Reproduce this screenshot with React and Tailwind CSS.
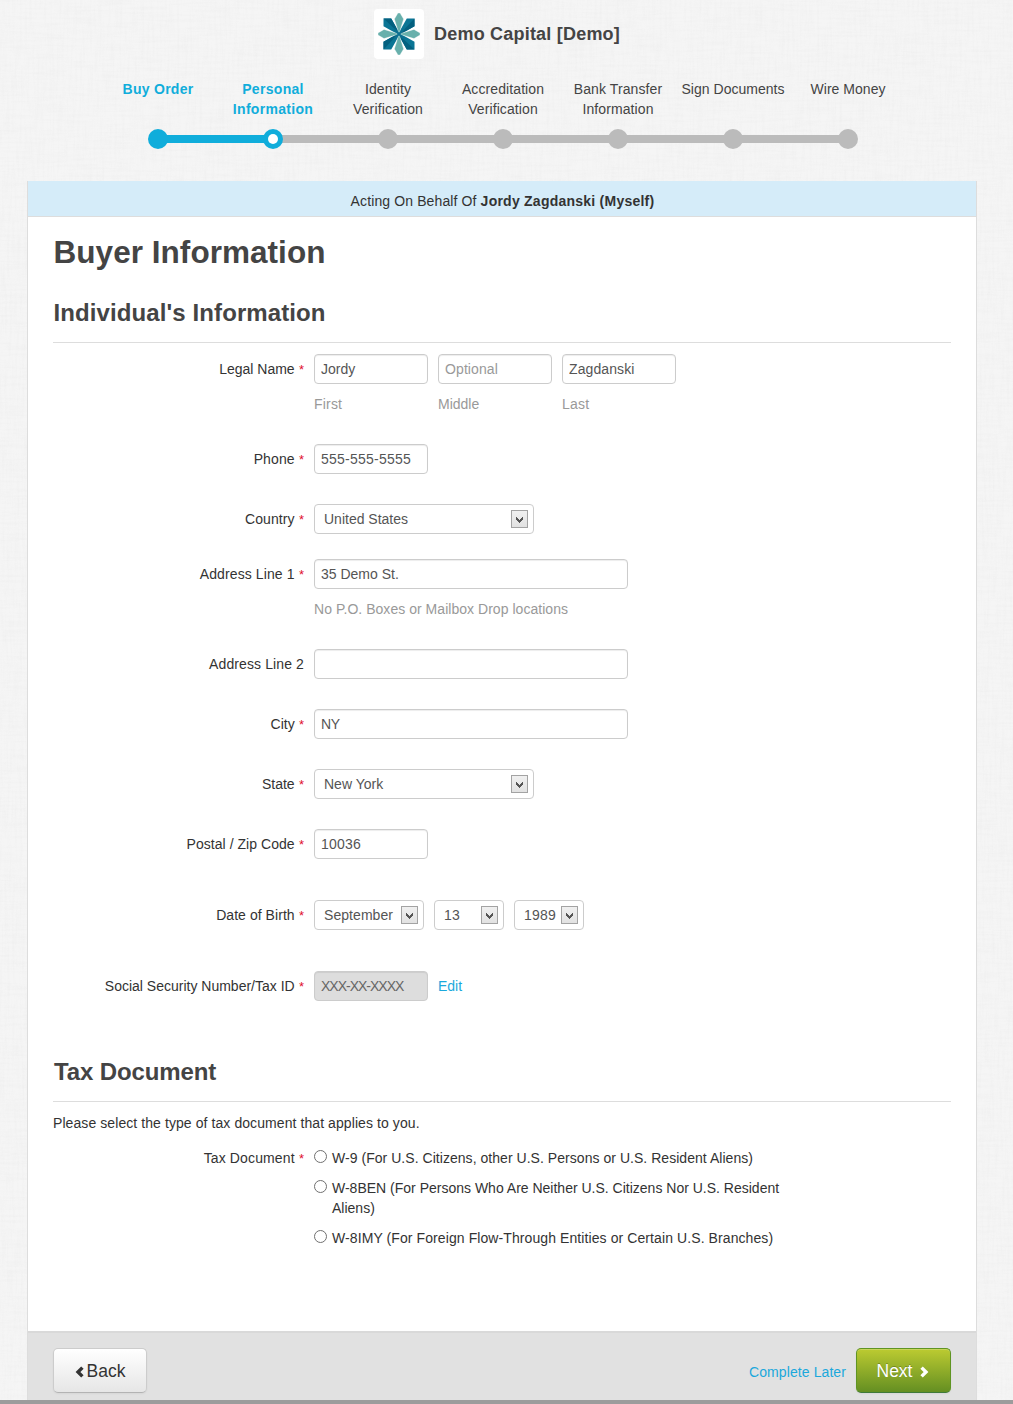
import React from 'react';

const steps = [
  { label: ['Buy Order'], track: 'tracking-[0.28px]', state: 'done' },
  { label: ['Personal', 'Information'], track: 'tracking-[0.3px]', state: 'current' },
  { label: ['Identity', 'Verification'], track: 'tracking-[0.12px]', state: 'todo' },
  { label: ['Accreditation', 'Verification'], track: 'tracking-[0.1px]', state: 'todo' },
  { label: ['Bank Transfer', 'Information'], track: 'tracking-[0.1px]', state: 'todo' },
  { label: ['Sign Documents'], track: 'tracking-[0.02px]', state: 'todo' },
  { label: ['Wire Money'], track: 'tracking-[0.03px]', state: 'todo' },
];

function Logo() {
  const kite = 'M0 0 L-4.6 -15 L-1 -21 H1 L4.6 -15 Z';
  const angles = [0, 90, 180, 270];
  return (
    <svg width="50" height="50" viewBox="-25 -25 50 50" className="rounded-[4px] bg-white">
      {angles.map((a) => (
        <g key={a} transform={`rotate(${a})`}>
          <path d="M-1 0 L7.8 -15.5 H15.5 V-7.8 L0 1 Z" fill="#0b7595" />
          <path d="M0 1 L15.5 -7.8 V-15.5 Z" fill="#04607f" />
        </g>
      ))}
      {angles.map((a) => (
        <path key={a} d={kite} transform={`rotate(${a})`} fill="#68b0ac" stroke="#fff" strokeWidth=".35" />
      ))}
      <path d="M-5 -5 L5 5 M-5 5 L5 -5" stroke="#0b6f90" strokeWidth="1.8" />
    </svg>
  );
}

function Linen() {
  return (
    <svg className="absolute inset-0 h-full w-full" aria-hidden="true">
      <filter id="weft" x="0" y="0" width="100%" height="100%">
        <feTurbulence type="fractalNoise" baseFrequency="0.03 0.4" numOctaves="3" seed="4" />
        <feColorMatrix values="0 0 0 0 0.5  0 0 0 0 0.5  0 0 0 0 0.5  0.5 0 0 0 -0.2" />
      </filter>
      <filter id="warp" x="0" y="0" width="100%" height="100%">
        <feTurbulence type="fractalNoise" baseFrequency="0.4 0.03" numOctaves="3" seed="9" />
        <feColorMatrix values="0 0 0 0 0.5  0 0 0 0 0.5  0 0 0 0 0.5  0.5 0 0 0 -0.2" />
      </filter>
      <rect width="100%" height="100%" filter="url(#weft)" opacity=".22" />
      <rect width="100%" height="100%" filter="url(#warp)" opacity=".22" />
    </svg>
  );
}

function Dot({ state }) {
  if (state === 'current')
    return (
      <span className="relative z-10 flex size-5 items-center justify-center rounded-full bg-[#10addb]">
        <span className="size-2.5 rounded-full bg-white" />
      </span>
    );
  if (state === 'done') return <span className="relative z-10 size-5 rounded-full bg-[#10addb]" />;
  return <span className="relative z-10 size-5 rounded-full bg-[#bbb]" />;
}

function Row({ label, track = '', required = true, className, children }) {
  return (
    <div className={`flex ${className}`}>
      <div className={`mr-2.5 w-[251px] shrink-0 whitespace-nowrap text-right leading-[30px] text-[#333] ${track}`}>
        {label}
        {required && (
          <span className="tracking-normal text-[#e0102c]">
            {' '}
            <span className="ml-[0.4px] text-[13px]">*</span>
          </span>
        )}
      </div>
      {children}
    </div>
  );
}

function Field({ value, placeholder, width = 'w-[114px]', track = '' }) {
  return (
    <input
      type="text"
      defaultValue={value}
      placeholder={placeholder}
      className={`h-[30px] rounded-[4px] border border-[#ccc] bg-white px-1.5 text-sm text-[#555] shadow-[inset_0_1px_1px_rgba(0,0,0,0.075)] placeholder:text-[#999] ${width} ${track}`}
    />
  );
}

function Select({ value, width, track = '' }) {
  return (
    <button
      type="button"
      className={`flex h-[30px] items-center justify-between whitespace-nowrap rounded-[4px] border border-[#ccc] bg-white pl-[9px] pr-[5px] text-[#555] ${width} ${track}`}
    >
      {value}
      <span className="flex h-[18px] w-[17px] items-center justify-center border border-[#a3a3a3] bg-linear-to-b from-[#f0f0f0] to-[#e2e2e2]">
        <svg width="7" height="6" viewBox="0 0 7 6" shapeRendering="crispEdges" className="mt-0.5">
          <path d="M0 0h1v1h1v1h1v1h1V2h1V1h1V0h1v3H6v1H5v1H4v1H3V5H2V4H1V3H0z" fill="#555" />
        </svg>
      </span>
    </button>
  );
}

function Radio({ children, className }) {
  return (
    <label className={`flex ${className}`}>
      <input
        type="radio"
        name="tax"
        className="mr-[5px] mt-0.5 size-[13px] shrink-0 appearance-none rounded-full border border-[#707070] bg-white"
      />
      <span className="whitespace-nowrap">{children}</span>
    </label>
  );
}

export default function App() {
  return (
    <div className="relative h-[1404px] w-[1013px] overflow-hidden bg-[#f5f5f5] font-['Liberation_Sans',Arial,sans-serif] text-sm leading-5 text-[#333]">
      <Linen />
      <div className="relative flex h-full flex-col">
        <header className="flex h-[79px] items-start pl-[374px] pt-[9px]">
          <Logo />
          <span className="ml-2.5 text-[18px] font-bold leading-[50px] tracking-[0.21px] text-[#444]">
            Demo Capital [Demo]
          </span>
        </header>

        <ol className="ml-[100.5px] grid h-[102px] w-[805px] grid-cols-7">
          {steps.map((s, i) => (
            <li key={i} className="flex flex-col items-center">
              <div
                className={`h-[50px] text-center ${s.track} ${s.state === 'todo' ? 'text-[#444]' : 'font-bold text-[#10addb]'}`}
              >
                {s.label.map((t) => (
                  <div key={t}>{t}</div>
                ))}
              </div>
              <div className="relative flex h-5 w-full items-center justify-center">
                {i > 0 && (
                  <span
                    className={`absolute right-1/2 h-2 w-full ${i === 1 ? 'bg-[#10addb]' : 'bg-[#bbb]'}`}
                  />
                )}
                <Dot state={s.state} />
              </div>
            </li>
          ))}
        </ol>

        <main className="ml-[27px] flex w-[950px] flex-1 flex-col border-x border-[#ddd] bg-white">
          <div className="h-9 border-b border-[#ddd] bg-[#d5ecf9] pl-px pt-2.5 text-center">
            <span className="tracking-[0.12px]">Acting On Behalf Of </span>
            <strong className="tracking-[0.24px]">Jordy Zagdanski (Myself)</strong>
          </div>

          <form className="flex h-[1114px] flex-col px-[25px] pt-[15px]">
            <h1 className="pl-[0.5px] text-[31.5px] font-bold leading-10 tracking-[0.04px] text-[#444]">
              Buyer Information
            </h1>
            <h2 className="mt-[21px] h-[50px] border-b border-[#ddd] pl-[0.5px] text-2xl font-bold leading-10 tracking-[0.1px] text-[#444]">
              Individual's Information
            </h2>

            <Row label="Legal Name" className="mt-[11px] h-[90px]">
              <div className="flex gap-2.5 text-[#999]">
                <div className="flex flex-col gap-2.5">
                  <Field value="Jordy" />
                  <span className="tracking-[0.2px]">First</span>
                </div>
                <div className="flex flex-col gap-2.5">
                  <Field placeholder="Optional" track="tracking-[0.1px]" />
                  <span>Middle</span>
                </div>
                <div className="flex flex-col gap-2.5">
                  <Field value="Zagdanski" track="tracking-[0.1px]" />
                  <span className="tracking-[0.2px]">Last</span>
                </div>
              </div>
            </Row>
            <Row label="Phone" className="h-[60px]" track="tracking-[0.1px]">
              <Field value="555-555-5555" track="tracking-[0.23px]" />
            </Row>
            <Row label="Country" className="h-[55px]" track="tracking-[0.1px]">
              <Select value="United States" width="w-[220px]" />
            </Row>
            <Row label="Address Line 1" className="h-[90px]" track="tracking-[0.11px]">
              <div className="flex flex-col gap-2.5 text-[#999]">
                <Field value="35 Demo St." width="w-[314px]" />
                <span className="tracking-[0.035px]">No P.O. Boxes or Mailbox Drop locations</span>
              </div>
            </Row>
            <Row label="Address Line 2" required={false} className="h-[60px]" track="tracking-[0.11px]">
              <Field width="w-[314px]" />
            </Row>
            <Row label="City" className="h-[60px]">
              <Field value="NY" width="w-[314px]" track="tracking-[-0.4px]" />
            </Row>
            <Row label="State" className="h-[60px]">
              <Select value="New York" width="w-[220px]" />
            </Row>
            <Row label="Postal / Zip Code" className="h-[71px]" track="tracking-[0.04px]">
              <Field value="10036" track="tracking-[0.2px]" />
            </Row>
            <Row label="Date of Birth" className="h-[71px]" track="tracking-[0.05px]">
              <div className="flex gap-2.5">
                <Select value="September" width="w-[110px]" track="tracking-[0.06px]" />
                <Select value="13" width="w-[70px]" track="tracking-[0.2px]" />
                <Select value="1989" width="w-[70px]" track="tracking-[0.2px]" />
              </div>
            </Row>
            <Row label="Social Security Number/Tax ID" className="h-[81px]">
              <input
                disabled
                defaultValue="XXX-XX-XXXX"
                className="h-[30px] w-[114px] rounded-[4px] border border-[#ccc] bg-[#ddd] px-1.5 text-sm tracking-[-1px] text-[#666] shadow-[inset_0_1px_1px_rgba(0,0,0,0.075)]"
              />
              <a className="ml-2.5 leading-[30px] text-[#1ba8dc]">Edit</a>
            </Row>

            <h2 className="h-[50px] border-b border-[#ddd] pl-px text-2xl font-bold leading-10 tracking-[-0.13px] text-[#444]">
              Tax Document
            </h2>
            <p className="mb-[15px] mt-[11px] tracking-[0.08px]">
              Please select the type of tax document that applies to you.
            </p>
            <Row label="Tax Document" className="[&>div:first-child]:leading-5" track="tracking-[0.12px]">
              <div className="flex flex-col gap-2.5">
                <Radio className="tracking-[0.04px]">
                  W-9 (For U.S. Citizens, other U.S. Persons or U.S. Resident Aliens)
                </Radio>
                <Radio className="tracking-[0px]">
                  W-8BEN (For Persons Who Are Neither U.S. Citizens Nor U.S. Resident
                  <br />
                  Aliens)
                </Radio>
                <Radio className="tracking-[0.09px]">
                  W-8IMY (For Foreign Flow-Through Entities or Certain U.S. Branches)
                </Radio>
              </div>
            </Row>
          </form>

          <footer className="flex flex-1 items-start justify-between border-t-2 border-[#d9d9d9] bg-[#e1e1e1] px-[25px] pt-[15px]">
            <button
              type="button"
              className="flex h-[45px] w-[94px] items-center justify-center gap-[3px] rounded-[5px] border border-[#ccc] border-b-[#b3b3b3] bg-linear-to-b from-white to-[#e6e6e6] text-[17.5px] text-[#333] shadow-[inset_0_1px_0_rgba(255,255,255,0.2),0_1px_2px_rgba(0,0,0,0.05)]"
            >
              <svg width="9" height="12" viewBox="0 0 9 12" className="mt-0.5">
                <path d="M7.4 1.6 3 6l4.4 4.4" fill="none" stroke="#333" strokeWidth="3.4" />
              </svg>
              Back
            </button>
            <div className="flex">
              <a className="mr-2.5 mt-3.5 tracking-[0.09px] text-[#1ba8dc]">Complete Later</a>
              <button
                type="button"
                className="flex h-[45px] w-[95px] items-center justify-center gap-2 rounded-[5px] border border-[#5f9422] border-b-[#3f7a3a] bg-linear-to-b from-[#bccb31] to-[#648f22] pr-px text-[17.5px] text-white shadow-[inset_0_1px_0_rgba(255,255,255,0.2),0_1px_2px_rgba(0,0,0,0.05)] [text-shadow:0_-1px_0_rgba(0,0,0,0.25)]"
              >
                Next
                <svg width="9" height="12" viewBox="0 0 9 12" className="mt-0.5">
                  <path d="M1.6 1.6 6 6l-4.4 4.4" fill="none" stroke="#fff" strokeWidth="3.4" />
                </svg>
              </button>
            </div>
          </footer>
        </main>
      </div>
      <div className="absolute inset-x-0 bottom-0 h-1 bg-[#9c9c9c]" />
    </div>
  );
}
